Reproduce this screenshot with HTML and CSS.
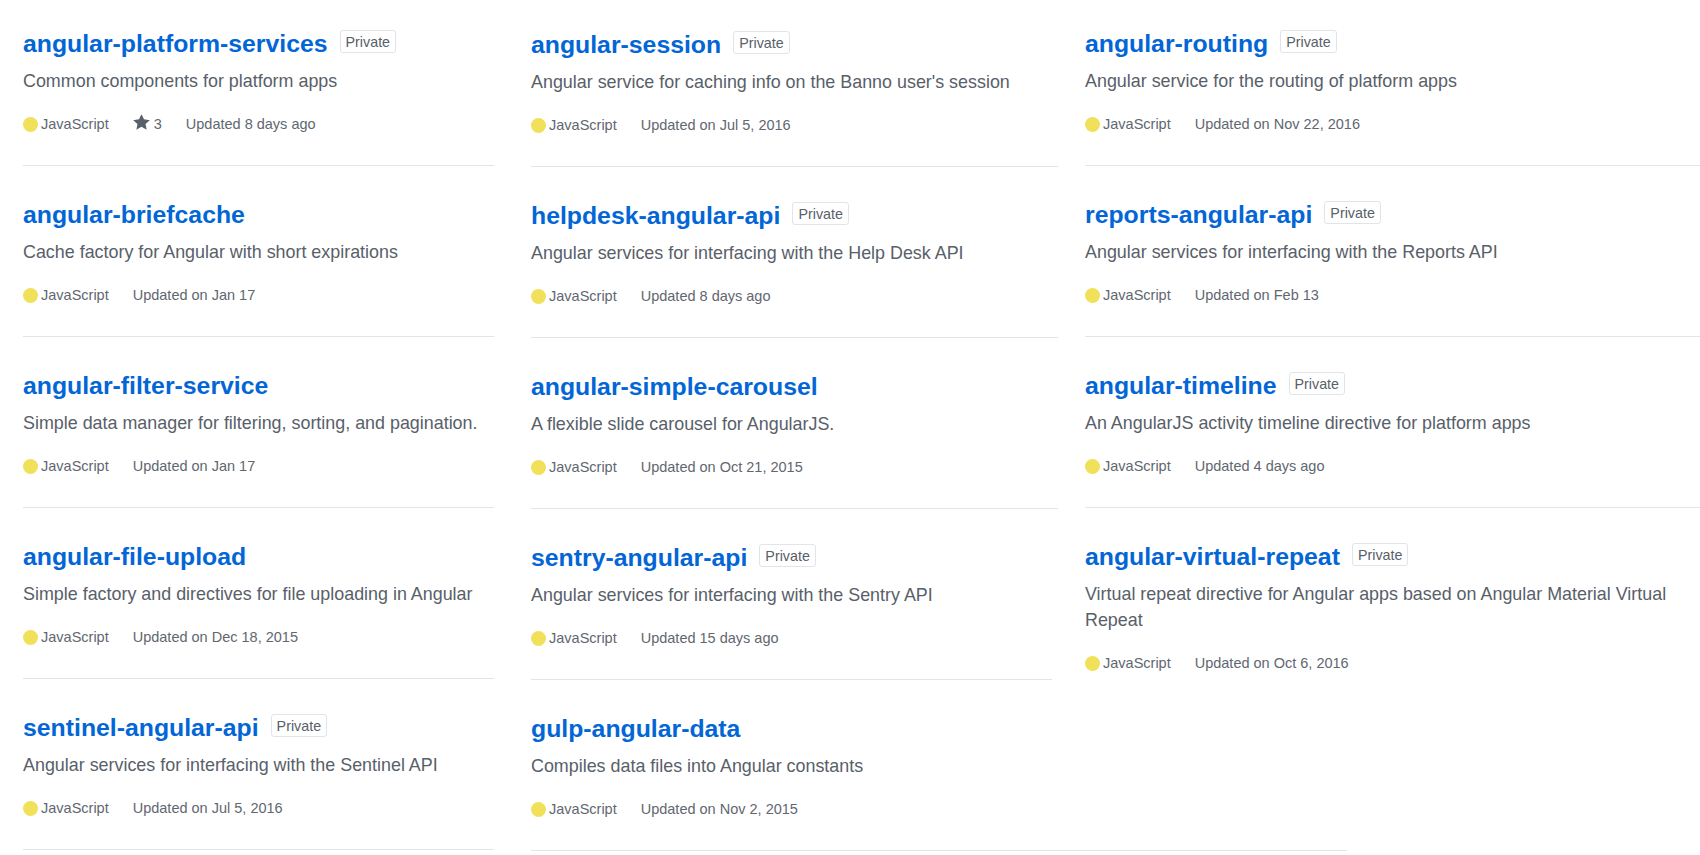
FILE: index.html
```html
<!DOCTYPE html>
<html lang="en">
<head>
<meta charset="utf-8">
<title>Repositories</title>
<link rel="stylesheet" href="styles.css">
</head>
<body>
<div class="repo-grid">
  <ul class="repo-col col-1">
    <li class="repo">
      <div class="repo-head"><a class="repo-name" href="#">angular-platform-services</a><span class="label">Private</span></div>
      <p class="repo-desc">Common components for platform apps</p>
      <div class="repo-meta">
        <span class="meta-item"><span class="lang-dot"></span>JavaScript</span>
        <span class="meta-item"><svg class="star" viewBox="0 0 14 16" width="17" height="19"><path d="M14 6l-4.9-.64L7 1 4.9 5.36 0 6l3.6 3.26L2.67 14 7 11.670 11.33 14l-.93-4.74L14 6z"/></svg>3</span>
        <span class="meta-item">Updated 8 days ago</span>
      </div>
    </li>
    <li class="repo">
      <div class="repo-head"><a class="repo-name" href="#">angular-briefcache</a></div>
      <p class="repo-desc">Cache factory for Angular with short expirations</p>
      <div class="repo-meta">
        <span class="meta-item"><span class="lang-dot"></span>JavaScript</span>
        <span class="meta-item">Updated on Jan 17</span>
      </div>
    </li>
    <li class="repo">
      <div class="repo-head"><a class="repo-name" href="#">angular-filter-service</a></div>
      <p class="repo-desc">Simple data manager for filtering, sorting, and pagination.</p>
      <div class="repo-meta">
        <span class="meta-item"><span class="lang-dot"></span>JavaScript</span>
        <span class="meta-item">Updated on Jan 17</span>
      </div>
    </li>
    <li class="repo">
      <div class="repo-head"><a class="repo-name" href="#">angular-file-upload</a></div>
      <p class="repo-desc">Simple factory and directives for file uploading in Angular</p>
      <div class="repo-meta">
        <span class="meta-item"><span class="lang-dot"></span>JavaScript</span>
        <span class="meta-item">Updated on Dec 18, 2015</span>
      </div>
    </li>
    <li class="repo">
      <div class="repo-head"><a class="repo-name" href="#">sentinel-angular-api</a><span class="label">Private</span></div>
      <p class="repo-desc">Angular services for interfacing with the Sentinel API</p>
      <div class="repo-meta">
        <span class="meta-item"><span class="lang-dot"></span>JavaScript</span>
        <span class="meta-item">Updated on Jul 5, 2016</span>
      </div>
    </li>
  </ul>

  <ul class="repo-col col-2">
    <li class="repo">
      <div class="repo-head"><a class="repo-name" href="#">angular-session</a><span class="label">Private</span></div>
      <p class="repo-desc">Angular service for caching info on the Banno user's session</p>
      <div class="repo-meta">
        <span class="meta-item"><span class="lang-dot"></span>JavaScript</span>
        <span class="meta-item">Updated on Jul 5, 2016</span>
      </div>
    </li>
    <li class="repo">
      <div class="repo-head"><a class="repo-name" href="#">helpdesk-angular-api</a><span class="label">Private</span></div>
      <p class="repo-desc">Angular services for interfacing with the Help Desk API</p>
      <div class="repo-meta">
        <span class="meta-item"><span class="lang-dot"></span>JavaScript</span>
        <span class="meta-item">Updated 8 days ago</span>
      </div>
    </li>
    <li class="repo">
      <div class="repo-head"><a class="repo-name" href="#">angular-simple-carousel</a></div>
      <p class="repo-desc">A flexible slide carousel for AngularJS.</p>
      <div class="repo-meta">
        <span class="meta-item"><span class="lang-dot"></span>JavaScript</span>
        <span class="meta-item">Updated on Oct 21, 2015</span>
      </div>
    </li>
    <li class="repo repo-narrow">
      <div class="repo-head"><a class="repo-name" href="#">sentry-angular-api</a><span class="label">Private</span></div>
      <p class="repo-desc">Angular services for interfacing with the Sentry API</p>
      <div class="repo-meta">
        <span class="meta-item"><span class="lang-dot"></span>JavaScript</span>
        <span class="meta-item">Updated 15 days ago</span>
      </div>
    </li>
    <li class="repo repo-wide">
      <div class="repo-head"><a class="repo-name" href="#">gulp-angular-data</a></div>
      <p class="repo-desc">Compiles data files into Angular constants</p>
      <div class="repo-meta">
        <span class="meta-item"><span class="lang-dot"></span>JavaScript</span>
        <span class="meta-item">Updated on Nov 2, 2015</span>
      </div>
    </li>
  </ul>

  <ul class="repo-col col-3">
    <li class="repo">
      <div class="repo-head"><a class="repo-name" href="#">angular-routing</a><span class="label">Private</span></div>
      <p class="repo-desc">Angular service for the routing of platform apps</p>
      <div class="repo-meta">
        <span class="meta-item"><span class="lang-dot"></span>JavaScript</span>
        <span class="meta-item">Updated on Nov 22, 2016</span>
      </div>
    </li>
    <li class="repo">
      <div class="repo-head"><a class="repo-name" href="#">reports-angular-api</a><span class="label">Private</span></div>
      <p class="repo-desc">Angular services for interfacing with the Reports API</p>
      <div class="repo-meta">
        <span class="meta-item"><span class="lang-dot"></span>JavaScript</span>
        <span class="meta-item">Updated on Feb 13</span>
      </div>
    </li>
    <li class="repo">
      <div class="repo-head"><a class="repo-name" href="#">angular-timeline</a><span class="label">Private</span></div>
      <p class="repo-desc">An AngularJS activity timeline directive for platform apps</p>
      <div class="repo-meta">
        <span class="meta-item"><span class="lang-dot"></span>JavaScript</span>
        <span class="meta-item">Updated 4 days ago</span>
      </div>
    </li>
    <li class="repo repo-last">
      <div class="repo-head"><a class="repo-name" href="#">angular-virtual-repeat</a><span class="label">Private</span></div>
      <p class="repo-desc">Virtual repeat directive for Angular apps based on Angular Material Virtual Repeat</p>
      <div class="repo-meta">
        <span class="meta-item"><span class="lang-dot"></span>JavaScript</span>
        <span class="meta-item">Updated on Oct 6, 2016</span>
      </div>
    </li>
  </ul>
</div>
</body>
</html>
```

FILE: styles.css
```css
html, body {
  margin: 0;
  padding: 0;
  background: #ffffff;
}

body {
  width: 1700px;
  height: 855px;
  overflow: hidden;
  font-family: "Liberation Sans", Arial, Helvetica, sans-serif;
  color: #586069;
}

.repo-grid {
  display: flex;
  align-items: flex-start;
  padding-left: 23px;
}

.repo-col {
  list-style: none;
  margin: 0;
  padding: 0;
  flex: none;
}

.col-1 {
  width: 471px;
  margin-right: 37px;
}

.col-2 {
  width: 527px;
  margin-right: 27px;
  padding-top: 1px;
}

.col-3 {
  width: 615px;
}

.repo {
  padding: 33px 0 31px;
  border-bottom: 1px solid #e1e4e8;
}

.repo:first-child {
  padding-top: 28px;
}

.repo-narrow {
  width: 521px;
}

.repo-wide {
  width: 816px;
}

.repo-last {
  border-bottom: none;
}

.repo-head {
  display: flex;
  align-items: flex-start;
  height: 31px;
}

.repo-name {
  font-size: 24.8px;
  line-height: 31px;
  font-weight: bold;
  color: #0366d6;
  text-decoration: none;
  white-space: nowrap;
}

.label {
  margin-left: 12px;
  margin-top: 2px;
  padding: 1px 5px 0;
  height: 21px;
  line-height: 21px;
  font-size: 14.3px;
  color: #586069;
  border: 1px solid #e1e4e8;
  border-radius: 3px;
  box-sizing: content-box;
  height: 20px;
}

.repo-desc {
  margin: 8px 0 0;
  padding-top: 1px;
  font-size: 17.9px;
  line-height: 26px;
  color: #586069;
}

.repo-meta {
  display: flex;
  align-items: center;
  gap: 24px;
  margin-top: 20px;
  height: 20px;
  font-size: 14.5px;
  line-height: 20px;
  color: #5f6770;
}

.meta-item {
  display: inline-flex;
  align-items: center;
  white-space: nowrap;
}

.lang-dot {
  display: inline-block;
  width: 15px;
  height: 15px;
  border-radius: 50%;
  background: #f1e05a;
  margin-right: 3px;
}

.star {
  fill: #586069;
  margin-right: 4px;
  margin-top: -3px;
}
```
